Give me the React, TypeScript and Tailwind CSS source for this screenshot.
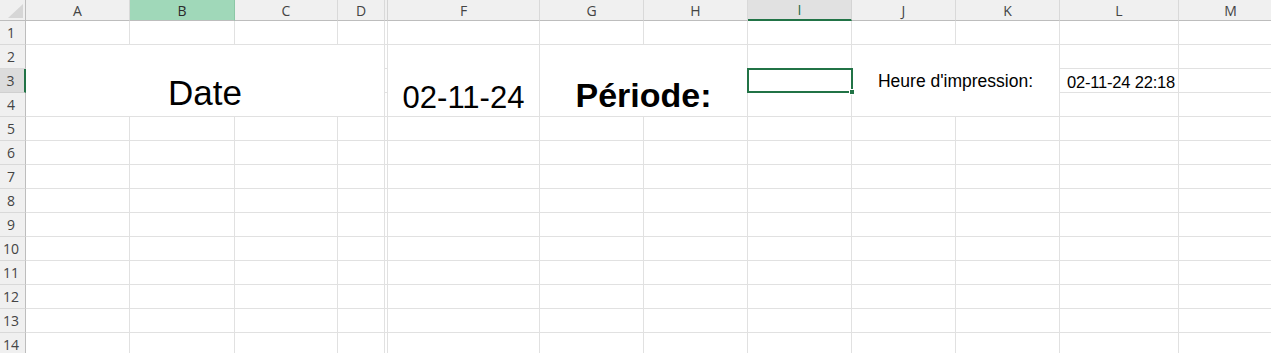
import React from "react";

const COLS = ["A", "B", "C", "D", "E", "F", "G", "H", "I", "J", "K", "L", "M"];
const ROWS = Array.from({ length: 14 }, (_, i) => i + 1);

const cellFont = { fontFamily: '"Liberation Sans", Arial, sans-serif' };

function ColHeader({ col }: { col: string }) {
    if (col === "E") {
        return <div className="border-r border-b border-r-[#d4d4d4] border-b-[#bdbdbd] bg-[#f0f0f0]" />;
    }
    if (col === "B") {
        return (
            <div className="flex items-center justify-center border-r border-b border-r-[#8cc7a6] border-b-[#bdbdbd] bg-[#a0d8b9] text-[14px] text-[#2b2b2b]">
                {col}
            </div>
        );
    }
    if (col === "I") {
        return (
            <div className="flex items-center justify-center border-r border-r-[#d4d4d4] border-b-2 border-b-[#217346] bg-[#e1e1e1] text-[14px] text-[#1f6b42]">
                {col}
            </div>
        );
    }
    return (
        <div className="flex items-center justify-center border-r border-b border-r-[#d9d9d9] border-b-[#bdbdbd] bg-[#f0f0f0] text-[14px] text-[#444]">
            {col}
        </div>
    );
}

function RowHeader({ row }: { row: number }) {
    const active = row === 3;
    return (
        <div
            className={
                active
                    ? "flex items-center justify-center pr-[3px] border-b border-b-[#d0d0d0] border-r-2 border-r-[#217346] bg-[#dcdcdc] text-[14px] text-[#444]"
                    : "flex items-center justify-center pr-[3px] border-b border-b-[#d9d9d9] border-r border-r-[#bdbdbd] bg-[#f0f0f0] text-[14px] text-[#444]"
            }
        >
            {row}
        </div>
    );
}

const plain = "border-r border-b border-[#e1e1e1] bg-white";

export default function App() {
    const cells: React.ReactNode[] = [];

    // header row
    cells.push(
        <div key="corner" className="relative border-r border-b border-r-[#bdbdbd] border-b-[#bdbdbd] bg-[#f0f0f0]">
            <svg className="absolute right-[2px] bottom-[2px]" width="15" height="14" viewBox="0 0 15 14">
                <polygon points="15,0 15,14 0,14" fill="#d6d6d6" />
            </svg>
        </div>
    );
    COLS.forEach((c) => cells.push(<ColHeader key={`h-${c}`} col={c} />));

    ROWS.forEach((r) => {
        cells.push(<RowHeader key={`r-${r}`} row={r} />);
        COLS.forEach((c) => {
            const key = `${c}${r}`;
            if (r >= 2 && r <= 4) {
                if (r === 2 && c === "A") {
                    cells.push(
                        <div key={key} className={`col-span-4 row-span-3 flex items-end justify-center pb-[6px] ${plain}`}>
                            <span className="text-[35px] leading-none text-black" style={cellFont}>
                                Date
                            </span>
                        </div>
                    );
                    return;
                }
                if (r === 2 && c === "F") {
                    cells.push(
                        <div key={key} className={`row-span-3 flex items-end justify-center pb-[3px] ${plain}`}>
                            <span className="text-[31px] leading-none text-black" style={cellFont}>
                                02-11-24
                            </span>
                        </div>
                    );
                    return;
                }
                if (r === 2 && c === "G") {
                    cells.push(
                        <div key={key} className={`col-span-2 row-span-3 flex items-end justify-center pb-[4px] ${plain}`}>
                            <span className="text-[34px] font-bold leading-none text-black" style={cellFont}>
                                Période:
                            </span>
                        </div>
                    );
                    return;
                }
                if (r === 2 && c === "J") {
                    cells.push(
                        <div key={key} className={`col-span-2 row-span-3 flex items-center justify-center pt-[2px] ${plain}`}>
                            <span className="text-[17.5px] leading-none text-black" style={cellFont}>
                                Heure d'impression:
                            </span>
                        </div>
                    );
                    return;
                }
                if (["A", "B", "C", "D", "F", "G", "H", "J", "K"].includes(c)) return;
                if (r === 3 && c === "I") {
                    cells.push(
                        <div key={key} className={`relative ${plain}`}>
                            <div className="absolute -left-px -top-px -right-[2px] -bottom-px border-2 border-[#217346]" />
                            <div className="absolute -right-[4px] -bottom-[3px] h-[6px] w-[6px] border border-white bg-[#217346]" />
                        </div>
                    );
                    return;
                }
                if (r === 3 && c === "L") {
                    cells.push(
                        <div key={key} className={`flex items-end justify-end pr-[3px] pb-[2px] ${plain}`}>
                            <span className="text-[16.5px] leading-none tracking-[-0.2px] text-black" style={cellFont}>
                                02-11-24 22:18
                            </span>
                        </div>
                    );
                    return;
                }
            }
            if (c === "E") {
                cells.push(<div key={key} className="border-r border-b border-[#e1e1e1] bg-white" />);
                return;
            }
            cells.push(<div key={key} className={plain} />);
        });
    });

    return (
        <div
            className="h-[353px] w-[1271px] overflow-hidden bg-white"
            style={{ fontFamily: '"Open Sans", "Noto Sans", sans-serif' }}
        >
            <div className="grid grid-cols-[26px_104px_105px_103px_47px_3px_152px_104px_104px_104px_104px_104px_119px_104px] grid-rows-[21px_repeat(14,24px)]">
                {cells}
            </div>
        </div>
    );
}
